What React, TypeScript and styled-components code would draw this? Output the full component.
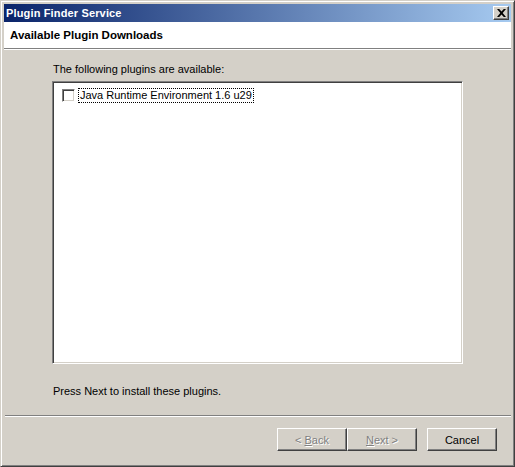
import styled, { createGlobalStyle } from "styled-components";

const face = "#d4d0c8";
const shadow = "#808080";
const darkShadow = "#404040";
const highlight = "#ffffff";

const GlobalStyle = createGlobalStyle`
  html, body {
    margin: 0;
    padding: 0;
    background: ${face};
  }
  body {
    font-family: "Liberation Sans", Arial, sans-serif;
    font-size: 11px;
    color: #000;
  }
`;

const Window = styled.div`
  box-sizing: border-box;
  width: 515px;
  height: 467px;
  background: ${face};
  border-top: 1px solid ${face};
  border-left: 1px solid ${face};
  border-right: 1px solid ${darkShadow};
  border-bottom: 1px solid ${darkShadow};
  box-shadow: inset 1px 1px ${highlight}, inset -1px -1px ${shadow};
  padding: 3px;
  display: flex;
  flex-direction: column;
`;

const TitleBar = styled.div`
  height: 18px;
  flex: none;
  background: linear-gradient(to right, #0a246a, #a6caf0);
  display: flex;
  align-items: center;
  justify-content: space-between;
  padding: 0 2px 0 2px;
`;

const Title = styled.span`
  color: #fff;
  font-weight: bold;
  font-size: 11px;
  letter-spacing: 0.15px;
`;

const CloseButton = styled.button`
  box-sizing: border-box;
  width: 16px;
  height: 14px;
  padding: 0;
  margin: 0;
  background: ${face};
  border-top: 1px solid ${highlight};
  border-left: 1px solid ${highlight};
  border-right: 1px solid ${darkShadow};
  border-bottom: 1px solid ${darkShadow};
  box-shadow: inset -1px -1px ${shadow};
  display: flex;
  align-items: center;
  justify-content: center;
`;

const Header = styled.div`
  height: 26px;
  flex: none;
  background: #fff;
  border-bottom: 1px solid ${shadow};
  box-shadow: 0 1px ${highlight};
  display: flex;
  align-items: center;
  padding-left: 6px;
  font-weight: bold;
  font-size: 11.5px;
`;

const Body = styled.div`
  flex: 1;
  display: flex;
  flex-direction: column;
  padding: 14px 48px 0 48px;
`;

const Label = styled.div`
  height: 13px;
  line-height: 13px;
  margin-left: 1px;
  margin-bottom: 5px;
`;

const ListBox = styled.div`
  box-sizing: border-box;
  height: 283px;
  background: #fff;
  border-top: 1px solid ${shadow};
  border-left: 1px solid ${shadow};
  border-right: 1px solid ${highlight};
  border-bottom: 1px solid ${highlight};
  box-shadow: inset 1px 1px ${darkShadow}, inset -1px -1px ${face};
  padding: 5px 9px;
`;

const Item = styled.label`
  display: flex;
  align-items: center;
  gap: 4px;
  height: 16px;
`;

const Check = styled.span`
  box-sizing: border-box;
  width: 13px;
  height: 13px;
  flex: none;
  background: #fff;
  border-top: 1px solid ${shadow};
  border-left: 1px solid ${shadow};
  border-right: 1px solid ${highlight};
  border-bottom: 1px solid ${highlight};
  box-shadow: inset 1px 1px ${darkShadow}, inset -1px -1px ${face};
`;

const ItemText = styled.span`
  outline: 1px dotted #000;
  padding: 0 1px;
  line-height: 13px;
`;

const Hint = styled.div`
  margin-top: 21px;
  margin-left: 1px;
  height: 13px;
  line-height: 13px;
`;

const Separator = styled.div`
  height: 1px;
  flex: none;
  background: ${shadow};
  border-bottom: 1px solid ${highlight};
  margin: 0 0 0 1px;
`;

const Footer = styled.div`
  flex: none;
  display: flex;
  justify-content: flex-end;
  padding: 11px 14px 12px 0;
`;

const Button = styled.button<{ $gap?: number }>`
  box-sizing: border-box;
  width: 70px;
  height: 23px;
  margin-left: ${(p) => p.$gap ?? 0}px;
  padding: 0;
  background: ${face};
  font-family: "Liberation Sans", Arial, sans-serif;
  font-size: 11px;
  color: #000;
  border-top: 1px solid ${highlight};
  border-left: 1px solid ${highlight};
  border-right: 1px solid ${darkShadow};
  border-bottom: 1px solid ${darkShadow};
  box-shadow: inset -1px -1px ${shadow};

  &:disabled {
    color: ${shadow};
    text-shadow: 1px 1px ${highlight};
  }
`;

export default function App() {
  return (
    <>
      <GlobalStyle />
      <Window>
        <TitleBar>
          <Title>Plugin Finder Service</Title>
          <CloseButton aria-label="Close">
            <svg width="9" height="8" viewBox="0 0 9 8">
              <path
                d="M0 0h2.2l2.3 2.6L6.8 0H9L5.7 4 9 8H6.8L4.5 5.4 2.2 8H0l3.3-4z"
                fill="#000"
              />
            </svg>
          </CloseButton>
        </TitleBar>
        <Header>Available Plugin Downloads</Header>
        <Body>
          <Label>The following plugins are available:</Label>
          <ListBox>
            <Item>
              <Check />
              <ItemText>Java Runtime Environment 1.6 u29</ItemText>
            </Item>
          </ListBox>
          <Hint>Press Next to install these plugins.</Hint>
        </Body>
        <Separator />
        <Footer>
          <Button disabled>
            &lt; <u>B</u>ack
          </Button>
          <Button disabled>
            <u>N</u>ext &gt;
          </Button>
          <Button $gap={10}>Cancel</Button>
        </Footer>
      </Window>
    </>
  );
}
